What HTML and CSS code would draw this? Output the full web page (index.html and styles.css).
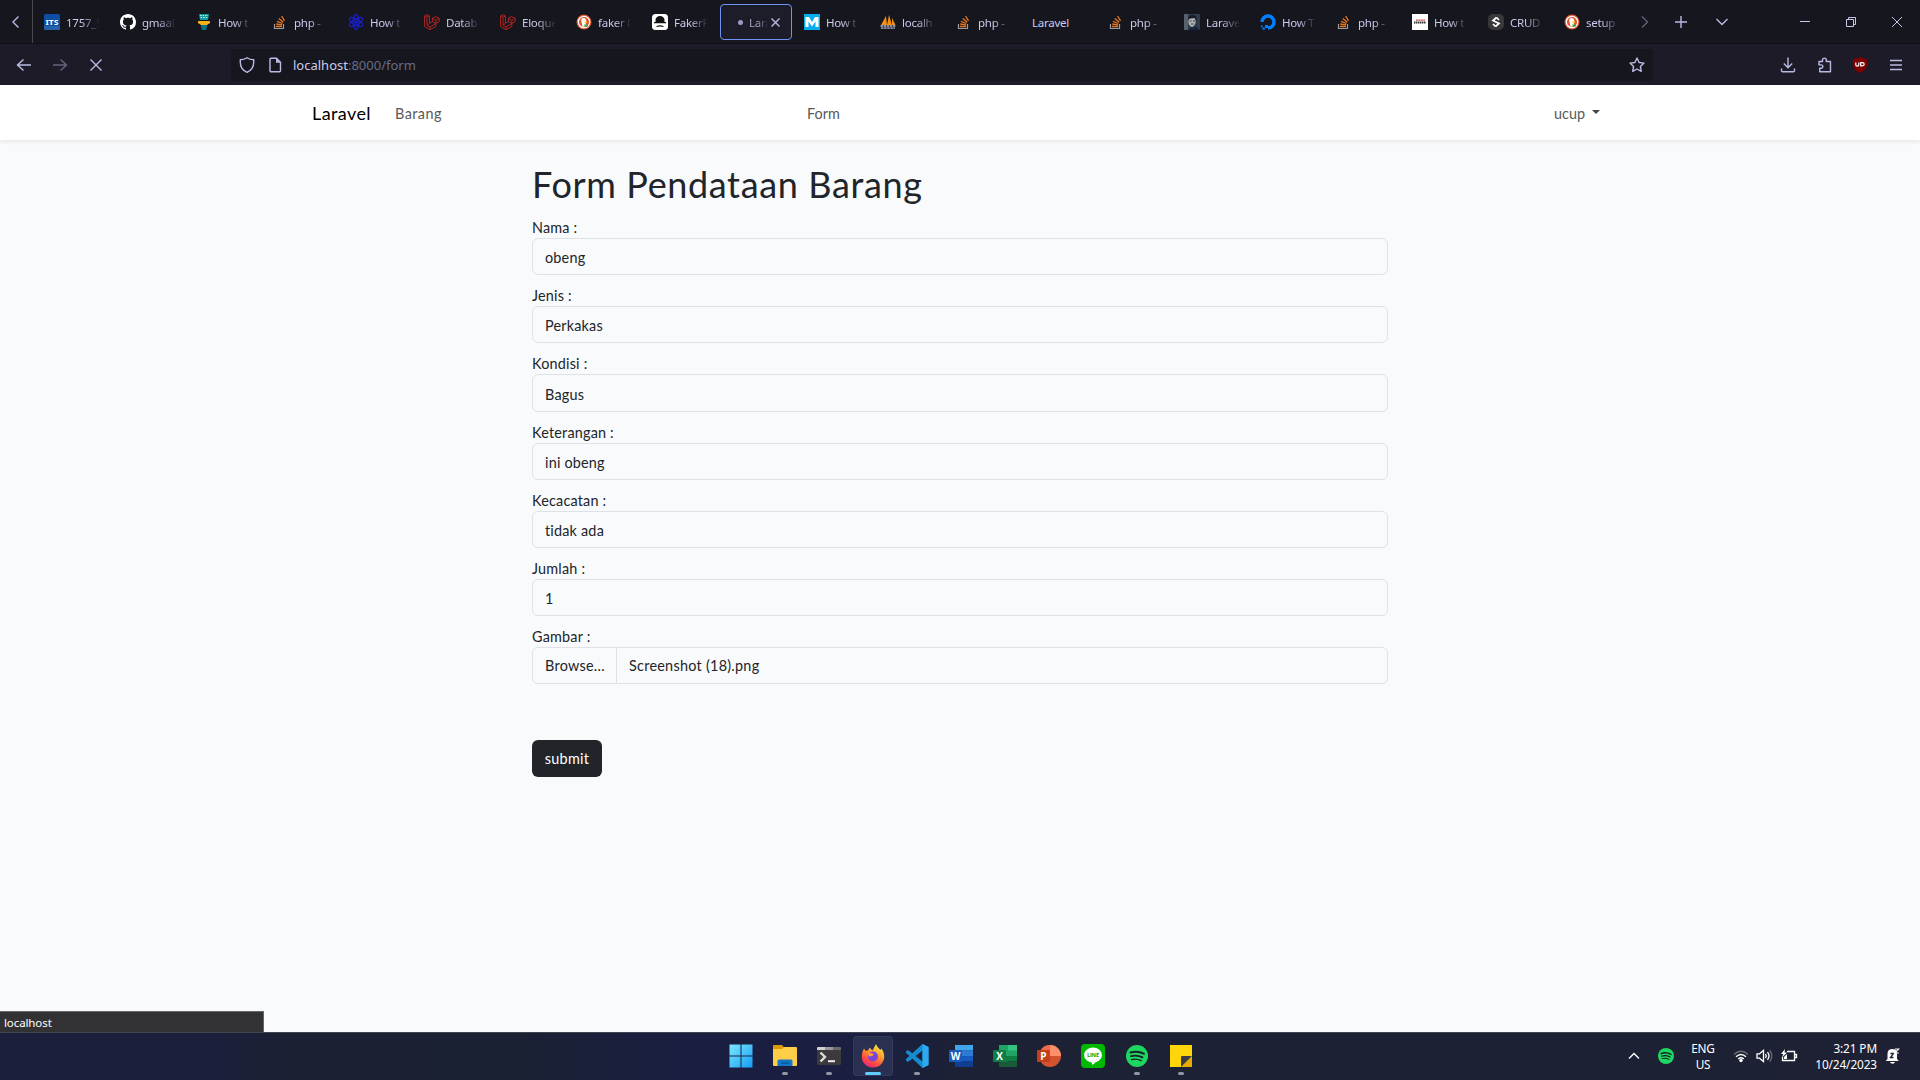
FILE: index.html
```html
<!DOCTYPE html>
<html lang="en">
<head>
<meta charset="utf-8">
<title>Laravel</title>
<link rel="stylesheet" href="styles.css">
</head>
<body>
<svg class="defs" aria-hidden="true">
  <symbol id="so" viewBox="0 0 16 16"><path d="M2.5 10v4.5h9V10" fill="none" stroke="#9a9da3" stroke-width="1.2"/><path d="M4 12.5h6M4.2 10l5.9.8M5 7.3l5.4 2.2M6.800 4.400l4.400 3.800M9.600 2l2.900 4.800" stroke="#e87722" stroke-width="1.300" fill="none"/></symbol>
  <symbol id="lara" viewBox="0 0 16 16"><path d="M.6 2 3 .6 5.400 2v7.300l3-1.700V4.300l3-1.700 3.800 1.700v3.300l-3.400 2v3L6 15.600.6 12.500zM.6 2 3 3.400 5.400 2M3 3.400v8L6 13v2.600M3 11.400l2.400-2M6 13l5.800-3.400-3.400-2M8.400 4.300l3.400 2 3.400-2M11.800 6.300v3.300" fill="none" stroke="#b3231f" stroke-width="1"/></symbol>
  <symbol id="duck" viewBox="0 0 16 16"><circle cx="8" cy="8" r="7.500" fill="#de5833"/><circle cx="8" cy="8" r="5.700" fill="#de5833" stroke="#fff" stroke-width="1.200"/><path d="M6.500 12.500 5.200 6.500c0-1.800 1.200-2.600 2.600-2.500 1.700.2 2.400 1.300 2.400 2.700L9.800 9.500v3z" fill="#fff"/><path d="M8.500 7.500h3l-1 1.500h-2z" fill="#fdd20a"/><path d="M8 10.500l4 .2v1.500l-3 1z" fill="#43a244"/></symbol>
  <symbol id="spot" viewBox="0 0 22 22"><circle cx="11" cy="11" r="11" fill="#1ed760"/><path d="M4.500 7.500c4.500-1.300 9.500-.9 13.300 1.200" stroke="#17202a" stroke-width="2.100" fill="none" stroke-linecap="round"/><path d="M5 11.200c4-1.100 8-.7 11.500 1.200" stroke="#17202a" stroke-width="1.800" fill="none" stroke-linecap="round"/><path d="M5.500 14.600c3.500-.9 6.700-.5 9.700 1.100" stroke="#17202a" stroke-width="1.400" fill="none" stroke-linecap="round"/></symbol>
</svg>

<header class="tabbar">
  <div class="scroll-left"><svg width="10" height="14" viewBox="0 0 10 14"><path d="M7.500 1.500 2 7l5.500 5.500" class="ln"/></svg></div>
  <nav class="tabs">
    <div class="tab"><svg viewBox="0 0 16 16"><rect width="16" height="16" rx="1.500" fill="#0b4ea2"/><path d="M0 12h16v2.500a1.500 1.500 0 0 1-1.500 1.500h-13A1.500 1.500 0 0 1 0 14.500z" fill="#2560a8"/><text x="1.500" y="11" class="its" textLength="13" lengthAdjust="spacingAndGlyphs">ITS</text></svg><span>1757_5</span></div>
    <div class="tab"><svg viewBox="0 0 16 16"><path fill="#fff" d="M8 0C3.580 0 0 3.580 0 8c0 3.540 2.290 6.530 5.470 7.590.4.070.55-.17.55-.38 0-.19-.010-.82-.010-1.490-2.010.37-2.530-.49-2.690-.94-.090-.23-.48-.94-.82-1.130-.28-.15-.68-.52-.010-.53.63-.010 1.080.58 1.230.82.72 1.210 1.870.87 2.330.66.070-.52.28-.87.510-1.070-1.780-.2-3.640-.89-3.640-3.950 0-.87.310-1.590.82-2.150-.080-.2-.36-1.020.080-2.120 0 0 .67-.21 2.200.82.64-.18 1.320-.27 2-.27s1.360.090 2 .27c1.530-1.040 2.200-.82 2.200-.82.44 1.100.16 1.920.080 2.120.510.56.82 1.270.82 2.150 0 3.070-1.870 3.750-3.650 3.950.29.25.54.73.54 1.480 0 1.070-.010 1.930-.010 2.200 0 .21.150.46.55.38A8.010 8.010 0 0 0 16 8c0-4.420-3.580-8-8-8z"/></svg><span>gmaal</span></div>
    <div class="tab"><svg viewBox="0 0 16 16"><path d="M3 0h10l-1 6H4z" fill="#139a9c"/><path d="M4 1.500h8M4.500 3.500h7" stroke="#b5f0e0" stroke-dasharray="1.500 1"/><path d="M2 7h12v2l-3 2H5L2 9z" fill="#f4b312"/><path d="M5 11h6v2l-1 3H6l-1-3z" fill="#0c7186"/></svg><span>How t</span></div>
    <div class="tab"><svg><use href="#so"/></svg><span>php -</span></div>
    <div class="tab"><svg viewBox="0 0 16 16" fill="none" stroke="#1b1fc4" stroke-width="1.300"><ellipse cx="8" cy="8" rx="3" ry="7.400"/><ellipse cx="8" cy="8" rx="3" ry="7.400" transform="rotate(60 8 8)"/><ellipse cx="8" cy="8" rx="3" ry="7.400" transform="rotate(120 8 8)"/><circle cx="8" cy="8" r="1.200" fill="#1b1fc4"/></svg><span>How t</span></div>
    <div class="tab"><svg><use href="#lara"/></svg><span>Datab</span></div>
    <div class="tab"><svg><use href="#lara"/></svg><span>Eloque</span></div>
    <div class="tab"><svg><use href="#duck"/></svg><span>faker l</span></div>
    <div class="tab"><svg viewBox="0 0 16 16"><rect width="16" height="16" rx="3.500" fill="#fff"/><path d="M3.500 8.500V6a4.500 4 0 0 1 9 0v2.500zM2 8h12v1.200H2zM4.500 12q3.500-1.500 7 0v1q-3.500-1-7 0z" fill="#111"/></svg><span>FakerP</span></div>
    <div class="tab active"><i class="dot"></i><span>Lara</span><svg class="x" viewBox="0 0 9 9"><path d="M.5.5l8 8m0-8l-8 8" class="ln"/></svg></div>
    <div class="tab"><svg viewBox="0 0 16 16"><rect width="16" height="16" fill="#06aef0"/><path d="M1.500 13V3H5l3 5 3-5h3.500v10h-3V7.500L8 12.500 4.500 7.500V13z" fill="#fff"/></svg><span>How t</span></div>
    <div class="tab"><svg viewBox="0 0 16 16"><path d="M1 11 6 2l1 9zM7 11l2-10 3 10zM12 11V4l3.500 7z" fill="#f29111"/><path d="M.5 12h15M1 14.200h14" stroke="#8c8ca3" stroke-width="1.800" stroke-dasharray="2.500 .6"/></svg><span>localh</span></div>
    <div class="tab"><svg><use href="#so"/></svg><span>php -</span></div>
    <div class="tab noicon"><span>Laravel</span></div>
    <div class="tab"><svg><use href="#so"/></svg><span>php -</span></div>
    <div class="tab"><svg viewBox="0 0 16 16"><rect width="16" height="16" fill="#303c4b"/><path d="M0 0h4v16H0z" fill="#57616b"/><path d="M4.500 5q3.500-4.500 7 0v4q-1.500 4-4 4-3-1.500-3-4z" fill="#aeb1af"/><path d="M4 6q0-5 5-5 4 0 3.500 6L10.500 4 6 4.500z" fill="#151c28"/><path d="M5.500 7h2m1.500 0h2m-4 3h2.500" stroke="#404750"/><path d="m4 16 3-3 2 1 2-2 5 4z" fill="#17243b"/></svg><span>Larave</span></div>
    <div class="tab"><svg viewBox="0 0 16 16"><path d="M2 8a6 6 0 1 1 6 6" fill="none" stroke="#0080ff" stroke-width="3.400"/><path d="M5 11h3v3H5zM2.500 13.500h2.300v2.300H2.500zM.8 11.500h1.800v1.800H.8z" fill="#0080ff"/></svg><span>How T</span></div>
    <div class="tab"><svg><use href="#so"/></svg><span>php -</span></div>
    <div class="tab"><svg viewBox="0 0 16 16"><rect width="16" height="16" fill="#fff"/><path d="M4 6.200h9" stroke="#d84a4a" stroke-width="1.200" stroke-dasharray="2 .4"/><path d="M2 8.500h12" stroke="#333" stroke-width="2" stroke-dasharray="1.500 .5"/></svg><span>How t</span></div>
    <div class="tab"><svg viewBox="0 0 16 16"><rect width="16" height="16" rx="5" fill="#38383a"/><path d="M8.500 3.500 5 6.500 11 9.500 7.500 12.500M8.500 3.500l2.500 2.500M5 10l2.500 2.500" fill="none" stroke="#fff" stroke-width="1.700"/></svg><span>CRUD</span></div>
    <div class="tab"><svg><use href="#duck"/></svg><span>setup</span></div>
  </nav>
  <div class="tabtools">
    <svg width="10" height="14" viewBox="0 0 10 14" class="dim"><path d="M2 1.500 7.500 7 2 12.500" class="ln"/></svg>
    <svg width="12" height="12" viewBox="0 0 12 12"><path d="M6 0v12M0 6h12" class="ln"/></svg>
    <svg width="12" height="8" viewBox="0 0 12 8"><path d="M.5 1 6 6.500 11.500 1" class="ln"/></svg>
  </div>
  <div class="winbtns">
    <svg width="10" height="10" viewBox="0 0 10 10"><path d="M0 4.500h10" class="hair"/></svg>
    <svg width="10" height="10" viewBox="0 0 10 10"><path d="M.5 2.500h7v7h-7zM2.500 2.500v-2h7v7h-2" class="hair"/></svg>
    <svg width="10" height="10" viewBox="0 0 10 10"><path d="M0 0l10 10M10 0 0 10" class="hair"/></svg>
  </div>
</header>

<div class="toolbar">
  <div class="navbtns">
    <svg width="16" height="16" viewBox="0 0 16 16"><path d="M15 8H1.500M7.500 2.500 1.500 8l6 5.500" class="ln"/></svg>
    <svg width="16" height="16" viewBox="0 0 16 16" class="dim"><path d="M1 8h13.500M8.500 2.500l6 5.500-6 5.500" class="ln"/></svg>
    <svg width="16" height="16" viewBox="0 0 16 16"><path d="M2.500 2.500l11 11m0-11l-11 11" class="ln"/></svg>
  </div>
  <div class="urlbar">
    <svg width="16" height="16" viewBox="0 0 16 16"><path d="M8 .7c2 1.500 4.200 2 6.700 2.100v2.500c0 4-2 8-6.700 10-4.700-2-6.700-6-6.700-10V2.800C3.800 2.700 6 2.200 8 .7z" class="ln"/></svg>
    <svg width="14" height="16" viewBox="0 0 14 16" class="page"><path d="M3 1.200h5.500l4 4v8.600a1 1 0 0 1-1 1H3a1 1 0 0 1-1-1V2.200a1 1 0 0 1 1-1z" class="ln"/><path d="M8 1v4.700h4.700z" fill="#b9bbe4"/></svg>
    <span class="url">localhost<em>:8000/form</em></span>
    <svg width="16" height="16" viewBox="0 0 16 16"><path d="M8 1l2.100 4.500 4.900.6-3.600 3.400.9 4.900L8 12l-4.300 2.400.9-4.900L1 6.100l4.900-.6z" class="ln" stroke-linejoin="round"/></svg>
  </div>
  <div class="tools">
    <svg width="16" height="16" viewBox="0 0 16 16"><path d="M8 .5v10M3.800 6.500 8 10.700l4.200-4.200M1.500 11.500v2a1.200 1.200 0 0 0 1.200 1.200h10.600a1.200 1.200 0 0 0 1.200-1.200v-2" class="ln"/></svg>
    <svg width="16" height="16" viewBox="0 0 16 16"><path d="M2 4.500h3.500V3a1.900 1.900 0 0 1 3.800 0v1.500h4.200v10.200H2.700v-3.400h1.500a1.700 1.700 0 0 0 0-3.400H2z" class="ln" stroke-linejoin="round"/></svg>
    <svg width="16" height="16" viewBox="0 0 16 16"><path d="M8 0c2 1.300 4.500 1.900 7 2v5c0 4-2.500 7-7 9-4.500-2-7-5-7-9V2c2.500-.1 5-.7 7-2z" fill="#800000"/><path d="M3.800 5.500v2.300q0 1.400 1.500 1.400T6.800 7.800V5.500M8.700 5.700v3.200h1.500q2-.1 2-1.600t-2-1.600z" fill="none" stroke="#fff" stroke-width="1.200"/></svg>
    <svg width="16" height="16" viewBox="0 0 16 16"><path d="M2 3.500h12M2 8h12M2 12.500h12" class="ln"/></svg>
  </div>
</div>

<main class="page-body">
  <nav class="site-nav">
    <div class="container">
      <a class="brand">Laravel</a>
      <a class="link barang">Barang</a>
      <a class="link form">Form</a>
      <a class="link user">ucup<i class="caret"></i></a>
    </div>
  </nav>
  <form class="entry">
    <h1>Form Pendataan Barang</h1>
    <div class="field"><label>Nama :</label><input type="text" value="obeng"></div>
    <div class="field"><label>Jenis :</label><input type="text" value="Perkakas"></div>
    <div class="field"><label>Kondisi :</label><input type="text" value="Bagus"></div>
    <div class="field"><label>Keterangan :</label><input type="text" value="ini obeng"></div>
    <div class="field"><label>Kecacatan :</label><input type="text" value="tidak ada"></div>
    <div class="field"><label>Jumlah :</label><input type="text" value="1"></div>
    <div class="field"><label>Gambar :</label><div class="file"><span class="browse">Browse...</span><span class="name">Screenshot (18).png</span></div></div>
    <button type="button">submit</button>
  </form>
  <div class="status">localhost</div>
</main>

<footer class="taskbar">
  <div class="apps">
    <div class="app"><svg viewBox="0 0 24 24"><defs><linearGradient id="w" x1="0" y1="0" x2="1" y2="1"><stop offset="0" stop-color="#7beaff"/><stop offset="1" stop-color="#149cf5"/></linearGradient></defs><path d="M.5.500h11v11H.5zM12.500.500h11v11h-11zM.5 12.500h11v11H.5zM12.500 12.500h11v11h-11z" fill="url(#w)"/></svg></div>
    <div class="app run"><svg viewBox="0 0 24 24"><path d="M0 2q0-1 1-1h8l2.500 3H24v4H0z" fill="#dd9a05"/><path d="M0 5h9l2-2h12q1 0 1 1v17q0 1-1 1H1q-1 0-1-1z" fill="#ffce48"/><path d="M4.500 22v-5q0-1.500 1.500-1.500h12q1.500 0 1.500 1.500v5z" fill="#1177c6"/><path d="M8 19h8" stroke="#085a9e" stroke-width="1.500"/></svg></div>
    <div class="app run"><svg viewBox="0 0 24 24"><rect y="3" width="24" height="18" rx="1" fill="#3b3b3b"/><path d="M0 6V4q0-1 1-1h7v3z" fill="#d0d0d0"/><path d="M8 3h8v3H8z" fill="#9a9a9a"/><path d="M16 3h7q1 0 1 1v2h-8z" fill="#6b6b6b"/><path d="M3.500 8.500 8 13l-4.500 4.500" fill="none" stroke="#ddd" stroke-width="2.400"/><path d="M11 17.200h7" stroke="#eee" stroke-width="2"/></svg></div>
    <div class="app on"><svg viewBox="0 0 24 24"><defs><linearGradient id="f" x1=".8" y1="0" x2=".3" y2="1"><stop offset="0" stop-color="#fff04a"/><stop offset=".4" stop-color="#ffa02b"/><stop offset=".75" stop-color="#ff4a42"/><stop offset="1" stop-color="#ec2480"/></linearGradient></defs><path d="M3 4.500 4.800 7 7.500 6 8.500 3.500l3 3L15 0c1 3 3 4 4.500 6l1-1.500c2 3 3 6 2.700 9C22.500 19.500 18 23.500 12 23.500S.8 19 .8 13c0-3.500.7-6 2.200-8.500z" fill="url(#f)"/><circle cx="12" cy="12.500" r="5" fill="#7644d8"/><path d="M7 10q3-2 6 .5-2 2.500-5 2z" fill="#ff9a2e"/></svg></div>
    <div class="app run"><svg viewBox="0 0 24 24"><path d="m17.500 0 6 3v18l-6 3L3 10.500.5 8.500 2.500 6 5 7.500 17.500 17.500V6.500L5 16.500 2.500 18 .5 15.500z" fill="#168bd0"/><path d="m17.500 0 6 3v18l-6 3z" fill="#2ea9ef"/></svg></div>
    <div class="app"><svg viewBox="0 0 24 24"><path d="M6 1h18v5.500H6z" fill="#41a5ee"/><path d="M6 6.500h18V12H6z" fill="#2b7cd3"/><path d="M6 12h18v5.500H6z" fill="#185abd"/><path d="M6 17.500h18V23H6z" fill="#103f91"/><rect y="6" width="13" height="12" rx="1" fill="#185abd"/><text x="6.500" y="15.500" class="office">W</text></svg></div>
    <div class="app"><svg viewBox="0 0 24 24"><path d="M6 1h18v11H6z" fill="#21a366"/><path d="M15 1h9v5.500h-9z" fill="#33c481"/><path d="M6 12h9v11H6z" fill="#107c41"/><path d="M15 12h9v5.500h-9z" fill="#107c41"/><path d="M6 17.500h18V23H6z" fill="#185c37"/><rect y="6" width="13" height="12" rx="1" fill="#107c41"/><text x="6.500" y="15.500" class="office">X</text></svg></div>
    <div class="app"><svg viewBox="0 0 24 24"><circle cx="13" cy="12" r="11" fill="#d35230"/><path d="M13 1a11 11 0 0 1 11 11H13z" fill="#ff8f6b"/><path d="M13 1A11 11 0 0 0 2 12h11z" fill="#ed6c47"/><rect y="6" width="13" height="12" rx="1" fill="#c43e1c"/><text x="6.500" y="15.500" class="office">P</text></svg></div>
    <div class="app"><svg viewBox="0 0 24 24"><rect width="24" height="24" rx="4" fill="#00b900"/><ellipse cx="12" cy="11" rx="9" ry="7.500" fill="#fff"/><path d="M10 17h6l-4.500 4z" fill="#fff"/><text x="12" y="13.200" class="line" textLength="12">LINE</text></svg></div>
    <div class="app run"><svg class="s22"><use href="#spot"/></svg></div>
    <div class="app run"><svg viewBox="0 0 24 24"><path d="M1 1h22v22H1z" fill="#ffd60a"/><path d="M12 23h11V12z" fill="#e8ab00"/><path d="M12 23V13q0-1 1-1h10z" fill="#3a3a42"/></svg></div>
  </div>
  <div class="tray">
    <svg class="up" width="12" height="8" viewBox="0 0 12 8"><path d="M1 6.500 6 1.500l5 5" class="w"/></svg>
    <svg class="tspot" width="16" height="16"><use href="#spot"/></svg>
    <div class="lang">ENG<br>US</div>
    <svg class="wifi" width="16" height="14" viewBox="0 0 16 14"><path d="M1 5.500q7-6.500 14 0" class="w" opacity=".35"/><path d="M3 7.800q5-4.600 10 0M5.200 10q2.800-2.500 5.600 0" class="w"/><circle cx="8" cy="11.500" r="1.700" fill="#fff"/></svg>
    <svg class="vol" width="17" height="14" viewBox="0 0 17 14"><path d="M1 4.800h2.500L7.500 1.500v11L3.500 9.200H1z" class="w"/><path d="M9.500 5q1.500 2 0 4M11.500 3.200q3 3.800 0 7.600" class="w"/><path d="M13.800 1.500q4 5.500 0 11" class="w" opacity=".35"/></svg>
    <svg class="bat" width="17" height="14" viewBox="0 0 17 14"><path d="M6 2.500h7.500v9H1.500V8M13.500 5.500h2v3h-2" class="w"/><path d="M3 10V8l3-3v5z" fill="#fff"/><path d="M4 0 0 5h2.300L1 8.500 6 3.500H3.500z" fill="#fff"/></svg>
    <div class="clock">3:21 PM<br>10/24/2023</div>
    <svg class="bell" width="15" height="16" viewBox="0 0 15 16"><path d="M2.500 11V6q0-5 5-5 3 0 4 2l.5 3v5l1.500 1.500v.5H1v-.5zM5 14h5q-.5 1.800-2.500 1.800T5 14z" fill="#fff"/><path d="M5.500 5.500h3l-3 4h3" fill="none" stroke="#1e2235" stroke-width="1.300"/><path d="M9.800 1h4l-4 4h4" fill="none" stroke="#fff" stroke-width="1.100"/></svg>
  </div>
</footer>
</body>
</html>
```
FILE: styles.css
```css
* { box-sizing: border-box; }
body {
  margin: 0;
  width: 1920px;
  height: 1080px;
  overflow: hidden;
  display: flex;
  flex-direction: column;
  background: #f8fafc;
  font-family: "Noto Sans", sans-serif;
}
svg { display: block; flex: none; }
.defs { position: absolute; width: 0; height: 0; }
.ln { fill: none; stroke: #b9bbe4; stroke-width: 1.4; }
.hair { fill: none; stroke: #c5c8e8; stroke-width: 1; }
.w { fill: none; stroke: #fff; stroke-width: 1.3; }
.dim { opacity: .45; }

/* browser tabs */
.tabbar {
  display: flex;
  height: 44px;
  background: #15161e;
  border-bottom: 1px solid #0e0e14;
  flex: none;
}
.scroll-left {
  width: 33px;
  display: flex;
  align-items: center;
  padding-left: 11px;
  border-right: 1px solid #4a4a50;
}
.tabs { display: flex; gap: 4px; padding: 4px 0 3px 3px; width: 1599px; }
.tab {
  width: 72px;
  height: 36px;
  display: flex;
  align-items: center;
  padding-left: 8px;
  gap: 6px;
  flex: none;
  border-radius: 4px;
}
.tab svg { width: 16px; height: 16px; }
.tab span {
  width: 34px;
  overflow: hidden;
  white-space: nowrap;
  font-size: 11.5px;
  letter-spacing: -.25px;
  line-height: 18px;
  padding-top: 1px;
  color: #c9cbec;
  mask-image: linear-gradient(to right, #000 45%, transparent 100%);
}
.tab.noicon span { width: 50px; mask-image: none; }
.tab.active {
  background: #1d1c29;
  border: 1px solid #6f93f2;
  padding-left: 17px;
}
.tab.active .dot { width: 5px; height: 5px; border-radius: 50%; background: #9b9cc4; }
.tab.active span { width: 19px; opacity: .75; }
.tab.active .x { width: 9px; height: 9px; margin-left: -3px; }
.its { font: bold 7.5px "Noto Sans", sans-serif; fill: #fff; }
.tabtools { display: flex; align-items: center; gap: 25px; padding-left: 8px; width: 160px; }
.tabtools svg:nth-child(3) { margin-left: 4px; }
.winbtns { display: flex; align-items: center; gap: 36px; padding-left: 8px; }

/* address row */
.toolbar {
  height: 41px;
  display: flex;
  align-items: center;
  background: #1c1b27;
  flex: none;
}
.navbtns { display: flex; gap: 20px; padding-left: 16px; width: 231px; }
.urlbar {
  width: 1422px;
  height: 32px;
  border-radius: 4px;
  background: #16171e;
  display: flex;
  align-items: center;
  padding: 0 8px;
}
.urlbar .page { margin: 0 11px 0 13px; }
.url { flex: 1; font-size: 13px; color: #c9cbec; }
.url em { font-style: normal; color: #696a85; }
.tools { display: flex; gap: 20px; padding-left: 127px; }
.tools svg:nth-child(2) { margin-left: 1px; }
.tools svg:nth-child(3) { margin-left: -1px; }

/* web page */
.page-body {
  flex: 1;
  position: relative;
  font-family: Lato, "Noto Sans", sans-serif;
  font-size: 14.4px;
  line-height: 1.6;
  letter-spacing: .2px;
  font-variant-ligatures: none;
  color: #212529;
}
.site-nav {
  height: 55px;
  background: #fff;
  box-shadow: 0 2px 4px rgba(0, 0, 0, .075);
}
.container {
  width: 1320px;
  height: 100%;
  margin: 0 auto;
  padding: 2px 12px 0;
  display: flex;
  align-items: center;
}
.brand { font-size: 18px; letter-spacing: .4px; color: #000; width: 83px; }
.link { color: #595959; }
.barang { width: 412px; letter-spacing: .45px; }
.form { flex: 1; letter-spacing: 0; }
.user { display: flex; align-items: center; gap: 7px; padding-right: 8px; letter-spacing: 0; }
.caret { border: 4px solid transparent; border-top-color: #444; border-bottom: 0; margin-top: -3px; }
.entry { width: 856px; margin: 23px auto 0; }
h1 { margin: 0 0 9px; font-size: 36px; font-weight: 400; line-height: 43px; letter-spacing: .64px; }
.field { margin-bottom: 8px; }
label { display: block; height: 23.15px; padding-top: 1px; }
input, .file {
  display: flex;
  width: 100%;
  height: 37.04px;
  border: 1px solid #dee2e6;
  border-radius: 6px;
  background: #f8fafc;
  font: inherit;
  letter-spacing: inherit;
  color: inherit;
  padding: 7px 12px 5px;
}
.file { padding: 0; letter-spacing: .27px; }
.browse { width: 84px; padding: 6px 0 0 12px; border-right: 1px solid #dee2e6; }
.name { padding: 6px 12px 0; }
button {
  margin-top: 47.5px;
  width: 70px;
  height: 37px;
  border: 0;
  border-radius: 6px;
  background: #212529;
  color: #fff;
  font: inherit;
  letter-spacing: .3px;
  padding: 0;
}
.status {
  position: absolute;
  left: 0;
  bottom: 0;
  width: 264px;
  height: 21px;
  background: #323234;
  border: 1px solid #66666a;
  border-width: 1px 1px 0 0;
  color: #fff;
  font: 11.5px/21px "Noto Sans", sans-serif;
  letter-spacing: -.1px;
  padding-left: 4px;
}

/* desktop taskbar */
.taskbar {
  height: 48px;
  flex: none;
  display: flex;
  border-top: 1px solid #42444f;
  background: linear-gradient(to right, #1b1f3c 0, #1b1f3b 220px, #1b2132 290px, #1a2133 520px, #1a1f42 690px, #1a1f42 860px, #1c2135 960px, #1d2133 1920px);
}
.apps { display: flex; gap: 4px; padding: 3px 0 0 721px; width: 1628px; }
.app {
  width: 40px;
  height: 40px;
  border-radius: 4px;
  display: flex;
  align-items: center;
  justify-content: center;
  position: relative;
}
.app svg { width: 24px; height: 24px; }
.app .s22 { width: 22px; height: 22px; }
.app.on { background: #2a3050; box-shadow: inset 0 0 0 1px #343a57; }
.app.run::after, .app.on::after {
  content: "";
  position: absolute;
  bottom: 1px;
  width: 6px;
  height: 3px;
  border-radius: 2px;
  background: #9496a3;
}
.app.on::after { width: 16px; background: #60cdff; }
.office { font: bold 10px "Open Sans", sans-serif; fill: #fff; text-anchor: middle; }
.line { font: bold 5.5px "Open Sans", sans-serif; fill: #00a800; text-anchor: middle; }
.tray {
  display: flex;
  align-items: center;
  padding-bottom: 1px;
  color: #fff;
  font-size: 11.8px;
  line-height: 16px;
}
.tspot { margin-left: 18px; }
.lang { width: 26px; margin-left: 16px; text-align: center; letter-spacing: -.2px; }
.wifi { margin-left: 17px; }
.vol { margin-left: 7px; }
.bat { margin-left: 8px; }
.clock { width: 72px; margin-left: 7px; text-align: right; white-space: nowrap; letter-spacing: -.1px; }
.bell { margin-left: 8px; }
```
